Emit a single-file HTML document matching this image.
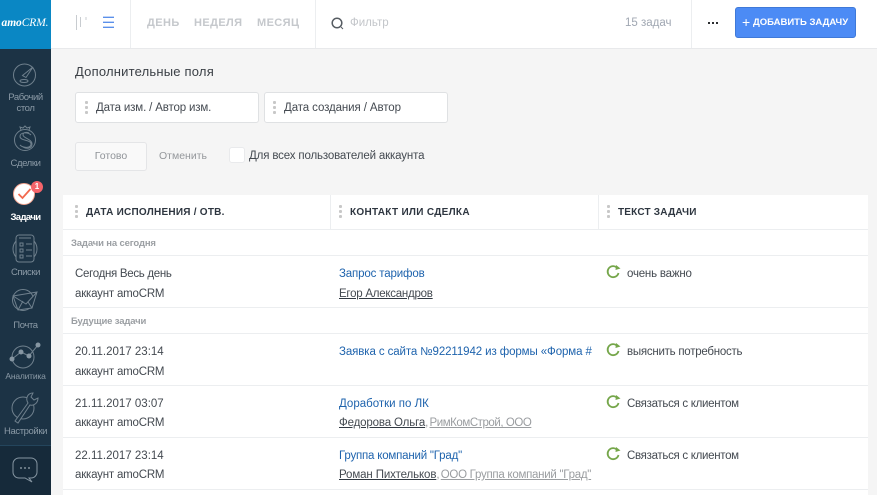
<!DOCTYPE html>
<html lang="ru"><head><meta charset="utf-8"><title>amoCRM</title>
<style>
html,body{margin:0;padding:0}
body{width:877px;height:495px;overflow:hidden;position:relative;background:#f5f5f5;font-family:"Liberation Sans",sans-serif;font-size:11.5px;color:#444a51}
.a{position:absolute;white-space:nowrap}
.l{position:absolute;background:#eceef0}
.nav{position:absolute;left:0;top:49px;width:51px;height:446px;background:#1c3345}
.navt{position:absolute;left:0;width:51px;text-align:center;font-size:9.5px;color:#8b9aa6;line-height:11px;letter-spacing:-.4px}
svg{position:absolute;overflow:visible}
.dots{position:absolute;width:3px;height:13px;background:radial-gradient(circle at 1.5px 1.5px,#c8c8c8 1.5px,transparent 1.7px) 0 0/3px 5px}
.box{position:absolute;top:92px;height:29px;background:#fff;border:1px solid #dfe1e3;border-radius:3px;box-sizing:content-box}
.hd{font-size:10px;font-weight:bold;letter-spacing:.25px;color:#2e3640}
.gp{font-size:9.5px;font-weight:bold;letter-spacing:-.15px;color:#9b9fa3}
.blue{color:#1e63ad}
.u{color:#444a51;text-decoration:underline;text-decoration-color:#313942;text-underline-offset:1px}
.g{color:#9a9da0;text-decoration:underline;text-decoration-color:#9a9da0;text-underline-offset:1px}
.tb{font-size:11px;font-weight:bold;letter-spacing:.4px;color:#c5c8cc;top:17px}
</style></head><body>
<div class="a" style="left:51px;top:0;width:826px;height:48px;background:#fff"></div>
<div class="l" style="left:51px;top:48px;width:826px;height:1px;background:#e8e9eb"></div>
<div class="l" style="left:130px;top:0;width:1px;height:48px"></div>
<div class="l" style="left:315px;top:0;width:1px;height:48px"></div>
<div class="l" style="left:691px;top:0;width:1px;height:48px"></div>

<div class="a" style="left:0;top:0;width:51px;height:49px;background:#0a87c4"></div>
<div class="a" style="left:1px;top:16px;width:48px;text-align:center;color:#fff;font-family:'Liberation Serif',serif;font-style:italic;font-size:11.5px;letter-spacing:-.1px;line-height:14px"><b>amo</b>CRM.</div>
<div class="nav"></div>
<div class="a" style="left:0;top:445px;width:51px;height:50px;background:#162a3a;border-top:1px solid #24455c;box-sizing:border-box"></div>

<svg style="left:0;top:49px" width="51" height="446" fill="none" stroke="#6f808d" stroke-width="1">
<circle cx="24.500" cy="26" r="11"/><path d="M22.500 26.500 33 18l-7 10.500z"/>
<ellipse cx="24" cy="32" rx="4" ry="1.500"/>
<circle cx="25" cy="91" r="10.500"/><path d="M21 81l-1-3 3 1 2-2 2 2 3-1-1 3"/><path d="M31 86c-3-3-11-3-11 1.500s11 3 11 7.500-8 4-11 1M29 84c-2-1-6-1-6 2s9 4 9 9-6 5-9 3"/>
<circle cx="25" cy="200" r="12"/><rect x="16" y="186" width="18" height="27" rx="3" fill="#1c3345"/><path d="M20 194h3v3h-3zM20 200h3v3h-3zM20 206h3v3h-3zM26 195h6M26 201h6M26 207h6M19 189h12"/>
<circle cx="23" cy="251" r="10.500"/><path d="M13 247 37 243 32 259 18 261zM13 247 26 255 37 243M18 261 23 252M32 259 28 253" fill="#1c3345"/>
<circle cx="23" cy="308" r="11"/><path d="M12 310l9-7 8 4 9-11"/><g fill="#8696a2" stroke="none"><circle cx="12" cy="310" r="2.500"/><circle cx="21" cy="303" r="2.500"/><circle cx="29" cy="307" r="2.500"/><circle cx="38" cy="296" r="2.500"/></g>
<circle cx="23" cy="359" r="11"/><path d="M15 372 28 354c-3-5 0-10 5-10l-2 4 3 3 4-2c0 5-4 8-8 7L18 374z" fill="#1c3345"/>
<path d="M19 409h12a6 6 0 0 1 6 6v8a6 6 0 0 1-6 6h-2l3 4-7-4h-6a6 6 0 0 1-6-6v-8a6 6 0 0 1 6-6z" stroke="#8696a2"/>
<path d="M20 419h2M24 419h2M28 419h2" stroke="#b7c1c9"/>
</svg>
<div class="navt" style="top:92px">Рабочий<br>стол</div>
<div class="navt" style="top:158px">Сделки</div>
<div class="navt" style="top:212px;color:#fff;font-weight:bold;letter-spacing:-.6px">Задачи</div>
<div class="navt" style="top:267px">Списки</div>
<div class="navt" style="top:320px">Почта</div>
<div class="navt" style="top:371px;font-size:8.500px;letter-spacing:-.2px">Аналитика</div>
<div class="navt" style="top:426px">Настройки</div>

<svg style="left:0;top:170px" width="51" height="60" fill="none">
<circle cx="24" cy="24" r="10.500" fill="#fff" stroke="#f4a48f"/><path d="M18.500 24l4 4 8-9" stroke="#f2694e" stroke-width="1.800"/>
<circle cx="37" cy="17" r="6" fill="#f5646a"/>
</svg>
<div class="a" style="left:31px;top:181px;width:12px;text-align:center;color:#fff;font-size:8px;font-weight:bold;line-height:12px">1</div>

<svg style="left:75px;top:15px" width="70" height="16" fill="none">
<path d="M1.500 0v15M5.500 2v10M11 2v3" stroke="#c8ccd0" stroke-width="1"/>
<path d="M28 2.300h11M28 7.300h11M28 12.300h11" stroke="#5b90ea" stroke-width="1.300"/>
</svg>
<div class="a tb" style="left:147px">ДЕНЬ</div>
<div class="a tb" style="left:194px">НЕДЕЛЯ</div>
<div class="a tb" style="left:257px">МЕСЯЦ</div>
<svg style="left:331px;top:17px" width="14" height="14" fill="none" stroke="#565c62"><circle cx="6" cy="6" r="4.800" stroke-width="1.500"/><path d="M10 10l2 2"/></svg>
<div class="a" style="left:350px;top:17px;color:#c3c6ca;font-size:11.500px">Фильтр</div>
<div class="a" style="left:625px;top:17px;color:#a0a7b2;font-size:11.500px">15 задач</div>
<div class="a" style="left:708px;top:22px;width:11px;height:2px;background:radial-gradient(circle at 1px 1px,#1b1d20 1px,transparent 1.200px) 0 0/4px 2px"></div>
<div class="a" style="left:735px;top:7px;width:121px;height:31px;background:#4c8bf5;border:1px solid #3f79d8;box-sizing:border-box;border-radius:3px"></div>
<div class="a" style="left:742px;top:15px;color:#fff;font-size:14px;line-height:15px">+</div>
<div class="a" style="left:753px;top:16px;color:#fff;font-size:9.500px;font-weight:bold;line-height:14px">ДОБАВИТЬ ЗАДАЧУ</div>

<div class="a" style="left:75px;top:64px;font-size:13px;letter-spacing:.2px;color:#3b4046">Дополнительные поля</div>
<div class="box" style="left:75px;width:182px"></div>
<div class="box" style="left:264px;width:182px"></div>
<div class="dots" style="left:85px;top:101px"></div>
<div class="dots" style="left:273px;top:101px"></div>
<div class="a" style="left:96px;top:102px;letter-spacing:-.15px;color:#444a51">Дата изм. / Автор изм.</div>
<div class="a" style="left:284px;top:102px;letter-spacing:-.1px;color:#444a51">Дата создания / Автор</div>
<div class="a" style="left:75px;top:142px;width:72px;height:29px;background:#f9f9f9;border:1px solid #e4e5e7;border-radius:3px;box-sizing:border-box"></div>
<div class="a" style="left:75px;top:150px;width:72px;text-align:center;font-size:10.500px;color:#8f9398">Готово</div>
<div class="a" style="left:159px;top:150px;font-size:10.500px;color:#94979b">Отменить</div>
<div class="a" style="left:229px;top:147px;width:16px;height:16px;background:#fff;border:1px solid #e9eaec;box-sizing:border-box;border-radius:3px"></div>
<div class="a" style="left:249px;top:150px;letter-spacing:-.15px;color:#444a51">Для всех пользователей аккаунта</div>

<div class="a" style="left:63px;top:195px;width:805px;height:300px;background:#fff"></div>
<div class="l" style="left:63px;top:229px;width:805px;height:1px"></div>
<div class="l" style="left:63px;top:255px;width:805px;height:1px"></div>
<div class="l" style="left:63px;top:307px;width:805px;height:1px"></div>
<div class="l" style="left:63px;top:333px;width:805px;height:1px"></div>
<div class="l" style="left:63px;top:385px;width:805px;height:1px"></div>
<div class="l" style="left:63px;top:437px;width:805px;height:1px"></div>
<div class="l" style="left:63px;top:489px;width:805px;height:1px"></div>
<div class="l" style="left:330px;top:195px;width:1px;height:34px"></div>
<div class="l" style="left:598px;top:195px;width:1px;height:34px"></div>
<div class="dots" style="left:75px;top:205px"></div>
<div class="dots" style="left:339px;top:205px"></div>
<div class="dots" style="left:607px;top:205px"></div>
<div class="a hd" style="left:86px;top:207px">ДАТА ИСПОЛНЕНИЯ / ОТВ.</div>
<div class="a hd" style="left:350px;top:207px;letter-spacing:.3px">КОНТАКТ ИЛИ СДЕЛКА</div>
<div class="a hd" style="left:618px;top:207px;letter-spacing:.2px">ТЕКСТ ЗАДАЧИ</div>
<div class="a gp" style="left:71px;top:238px">Задачи на сегодня</div>
<div class="a gp" style="left:71px;top:316px">Будущие задачи</div>

<div class="a" style="left:75px;top:268px;letter-spacing:-.3px">Сегодня Весь день</div>
<div class="a" style="left:75px;top:288px;letter-spacing:-.2px">аккаунт amoCRM</div>
<div class="a blue" style="left:339px;top:268px;letter-spacing:-.15px">Запрос тарифов</div>
<div class="a" style="left:339px;top:288px;letter-spacing:-.25px"><span class="u">Егор Александров</span></div>
<div class="a" style="left:627px;top:268px;letter-spacing:-.2px">очень важно</div>

<div class="a" style="left:75px;top:346px">20.11.2017 23:14</div>
<div class="a" style="left:75px;top:366px;letter-spacing:-.2px">аккаунт amoCRM</div>
<div class="a blue" style="left:339px;top:346px;width:253px;overflow:hidden;letter-spacing:-.1px">Заявка с сайта №92211942 из формы «Форма #</div>
<div class="a" style="left:627px;top:346px;letter-spacing:-.25px">выяснить потребность</div>

<div class="a" style="left:75px;top:398px">21.11.2017 03:07</div>
<div class="a" style="left:75px;top:417px;letter-spacing:-.2px">аккаунт amoCRM</div>
<div class="a blue" style="left:339px;top:398px">Доработки по ЛК</div>
<div class="a" style="left:339px;top:417px"><span class="u" style="letter-spacing:-.15px">Федорова Ольга</span><span style="color:#9a9da0;letter-spacing:-1px">, </span><span class="g" style="letter-spacing:-.45px">РимКомСтрой, ООО</span></div>
<div class="a" style="left:627px;top:398px;letter-spacing:-.3px">Связаться с клиентом</div>

<div class="a" style="left:75px;top:450px">22.11.2017 23:14</div>
<div class="a" style="left:75px;top:469px;letter-spacing:-.2px">аккаунт amoCRM</div>
<div class="a blue" style="left:339px;top:450px;letter-spacing:-.2px">Группа компаний "Град"</div>
<div class="a" style="left:339px;top:469px"><span class="u" style="letter-spacing:-.12px">Роман Пихтельков</span><span style="color:#9a9da0;letter-spacing:-1px">, </span><span class="g" style="letter-spacing:-.27px">ООО Группа компаний "Град"</span></div>
<div class="a" style="left:627px;top:450px;letter-spacing:-.3px">Связаться с клиентом</div>

<svg style="left:607px;top:265px" width="14" height="14" fill="none"><path d="M9.500 2.300A5.500 5.500 0 1 0 11.500 8" stroke="#75a64a" stroke-width="1.800"/><path d="M9 0l4.500 3.500-5 1.500z" fill="#75a64a"/></svg>
<svg style="left:607px;top:343px" width="14" height="14" fill="none"><path d="M9.500 2.300A5.500 5.500 0 1 0 11.500 8" stroke="#75a64a" stroke-width="1.800"/><path d="M9 0l4.500 3.500-5 1.500z" fill="#75a64a"/></svg>
<svg style="left:607px;top:395px" width="14" height="14" fill="none"><path d="M9.500 2.300A5.500 5.500 0 1 0 11.500 8" stroke="#75a64a" stroke-width="1.800"/><path d="M9 0l4.500 3.500-5 1.500z" fill="#75a64a"/></svg>
<svg style="left:607px;top:447px" width="14" height="14" fill="none"><path d="M9.500 2.300A5.500 5.500 0 1 0 11.500 8" stroke="#75a64a" stroke-width="1.800"/><path d="M9 0l4.500 3.500-5 1.500z" fill="#75a64a"/></svg>
</body></html>
